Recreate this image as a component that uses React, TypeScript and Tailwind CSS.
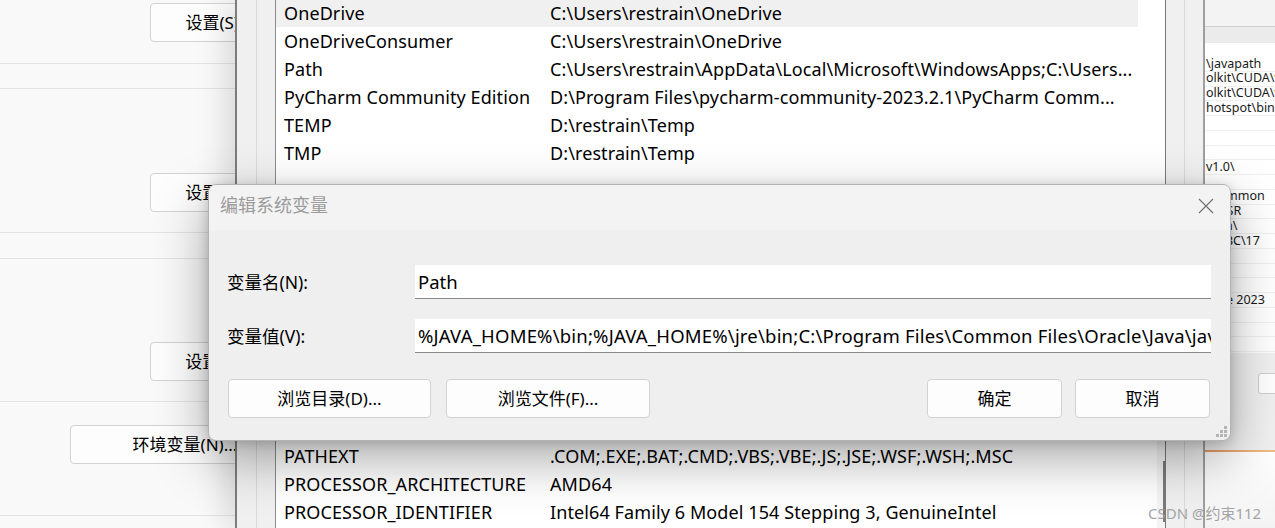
import React from "react";

const userVars = [
    ["OneDrive", "C:\\Users\\restrain\\OneDrive"],
    ["OneDriveConsumer", "C:\\Users\\restrain\\OneDrive"],
    ["Path", "C:\\Users\\restrain\\AppData\\Local\\Microsoft\\WindowsApps;C:\\Users..."],
    ["PyCharm Community Edition", "D:\\Program Files\\pycharm-community-2023.2.1\\PyCharm Comm..."],
    ["TEMP", "D:\\restrain\\Temp"],
    ["TMP", "D:\\restrain\\Temp"],
];

const sysVars = [
    ["Path", "%JAVA_HOME%\\bin;%JAVA_HOME%\\jre\\bin;C:\\Program Files\\Common..."],
    ["PATHEXT", ".COM;.EXE;.BAT;.CMD;.VBS;.VBE;.JS;.JSE;.WSF;.WSH;.MSC"],
    ["PROCESSOR_ARCHITECTURE", "AMD64"],
    ["PROCESSOR_IDENTIFIER", "Intel64 Family 6 Model 154 Stepping 3, GenuineIntel"],
];

const pathRows = [
    "\\javapath",
    "olkit\\CUDA\\v12",
    "olkit\\CUDA\\v12",
    "hotspot\\bin",
    "",
    "",
    "",
    "v1.0\\",
    "",
    "\\Common",
    "OLISR",
    "Binn\\",
    "ODBC\\17",
    "",
    "\\",
    "",
    "pute 2023",
    "",
    "",
    "",
];

const WinButton = ({ label, className }: { label: string; className: string }) => (
    <div
        className={
            "flex items-center justify-center h-[39px] shrink-0 bg-[#fdfdfd] border border-[#d2d2d2] rounded-[4px] text-[17px] text-black " +
            className
        }
    >
        {label}
    </div>
);

const VarRow = ({ name, value, active }: { name: string; value: string; active?: boolean }) => (
    <div className={"flex items-center h-[28px] pl-[8px] text-[18px] tracking-[0.1px] text-black whitespace-nowrap " + (active ? "bg-[#f0f0f0]" : "")}>
        <span className="w-[266px] shrink-0">{name}</span>
        <span>{value}</span>
    </div>
);

const App = () => {
    return (
        <div className="relative w-[1275px] h-[528px] overflow-hidden bg-[#f9f9f9] [font-family:'Noto_Sans','Noto_Sans_CJK_SC',sans-serif]">
            {/* settings window behind */}
            <div className="absolute left-0 top-0 w-[320px] h-full bg-[#f9f9f9] flex flex-col">
                <div className="h-[64px] border-b border-[#e3e3e3] pt-[3px] pl-[150px]">
                    <WinButton className="w-[138px]" label="设置(S)..." />
                </div>
                <div className="h-[25px] border-b border-[#e3e3e3]" />
                <div className="h-[144px] border-b border-[#e3e3e3] flex flex-col justify-end pb-[20px] pl-[150px]">
                    <WinButton className="w-[138px]" label="设置(T)..." />
                </div>
                <div className="h-[26px] border-b border-[#e3e3e3]" />
                <div className="h-[143px] border-b border-[#e3e3e3] flex flex-col justify-end pb-[20px] pl-[150px]">
                    <WinButton className="w-[138px]" label="设置(E)..." />
                </div>
                <div className="h-[114px] border-b border-[#e3e3e3] pt-[23px] pl-[70px]">
                    <WinButton className="w-[230px]" label="环境变量(N)..." />
                </div>
            </div>

            {/* environment variables window */}
            <div className="absolute left-[235px] top-0 w-[970px] h-full flex bg-[#f0f0f0] shadow-[-10px_0_28px_rgba(0,0,0,0.13)]">
                <div className="w-[2px] bg-[#7c7c7c]" />
                <div className="w-[20px] border-r border-[#dadada]" />
                <div className="w-[19px] border-r border-[#8c8c8c]" />
                <div className="w-[890px] border-r border-[#7a7a7a] flex flex-col">
                    <div className="h-[200px] bg-white flex overflow-hidden">
                        <div className="flex-1 -mt-[1px]">
                            {userVars.map((r, i) => (
                                <VarRow key={r[0]} name={r[0]} value={r[1]} active={i === 0} />
                            ))}
                        </div>
                        <div className="w-[27px]" />
                    </div>
                    <div className="h-[214px]" />
                    <div className="flex-1 bg-white flex overflow-hidden">
                        <div className="flex-1">
                            {sysVars.map((r) => (
                                <VarRow key={r[0]} name={r[0]} value={r[1]} />
                            ))}
                        </div>
                        <div className="w-[27px] pt-[47px] pl-[6px] bg-[#f4f4f4]">
                            <div className="w-[11px] h-[61px] bg-[#7b7b7b]" />
                        </div>
                    </div>
                </div>
                <div className="w-[19px] border-r border-[#dadada]" />
                <div className="w-[19px] border-r border-[#a0a0a0]" />
            </div>

            {/* path edit window on the right */}
            <div className="absolute left-[1204px] top-0 w-[120px] h-full flex flex-col border-l border-[#9d9d9d] bg-white">
                <div className="h-[27px] bg-[#f3f3f3] border-b border-[#cfcfcf]" />
                <div className="h-[16px] bg-[#ebebeb]" />
                <div className="h-[310px] pt-[14px] bg-white overflow-hidden">
                    {pathRows.map((t, i) => (
                        <div
                            key={i}
                            className="h-[14.75px] border-b border-[#efefef] flex items-center pl-[1px] text-[12.5px] leading-none text-[#1a1a1a] whitespace-nowrap"
                        >
                            {t}
                        </div>
                    ))}
                </div>
                <div className="h-[97px] bg-[#f0f0f0] pt-[20px] pl-[53px]">
                    <div className="w-[40px] h-[21px] bg-white border border-[#cdcdcd] rounded-[3px]" />
                </div>
                <div className="h-[2px] bg-gradient-to-r from-[#e89a62] to-[#f4d49c]" />
                <div className="flex-1 bg-gradient-to-b from-white to-[#f3f3f3]" />
            </div>

            {/* edit system variable dialog */}
            <div className="absolute left-[208px] top-[184px] w-[1023px] h-[257px] flex flex-col rounded-[8px] border border-[#b3b3b3] bg-[#efefef] overflow-hidden shadow-[0_18px_52px_rgba(0,0,0,0.34),0_2px_12px_rgba(0,0,0,0.16)]">
                <div className="h-[45px] shrink-0 flex items-center justify-between pl-[11px] pr-[16px] pb-[4px] bg-[#f3f3f3]">
                    <span className="text-[18px] text-[#9b9b9b]">编辑系统变量</span>
                    <svg width="16" height="16" viewBox="0 0 16 16" className="text-[#6e6e6e]">
                        <path d="M1 1 L15 15 M15 1 L1 15" stroke="currentColor" strokeWidth="1.1" fill="none" />
                    </svg>
                </div>
                <div className="flex-1 flex flex-col pt-[35px] pl-[18px] pr-[19px]">
                    <div className="flex items-center">
                        <span className="w-[188px] shrink-0 text-[17.5px] text-black">变量名(N):</span>
                        <div className="flex-1 h-[34px] bg-white border-b border-[#8a8a8a] flex items-center pl-[3px] text-[18.5px] text-black">
                            Path
                        </div>
                    </div>
                    <div className="flex items-center mt-[20px]">
                        <span className="w-[188px] shrink-0 text-[17.5px] text-black">变量值(V):</span>
                        <div className="flex-1 h-[34px] bg-white border-b border-[#8a8a8a] flex items-center pl-[3px] text-[18.5px] tracking-[0.2px] text-black whitespace-nowrap overflow-hidden">
                            %JAVA_HOME%\bin;%JAVA_HOME%\jre\bin;C:\Program Files\Common Files\Oracle\Java\javapath
                        </div>
                    </div>
                    <div className="flex items-center mt-[26px] pl-[1px] pr-[1px]">
                        <WinButton className="w-[203px]" label="浏览目录(D)..." />
                        <WinButton className="w-[204px] ml-[15px]" label="浏览文件(F)..." />
                        <WinButton className="w-[135px] ml-auto" label="确定" />
                        <WinButton className="w-[135px] ml-[13px]" label="取消" />
                    </div>
                </div>
                <svg width="12" height="12" viewBox="0 0 12 12" className="absolute right-[2px] bottom-[2px] text-[#b4b4b4]">
                    <rect x="8" y="0" width="3" height="3" fill="currentColor" />
                    <rect x="4" y="4" width="3" height="3" fill="currentColor" />
                    <rect x="8" y="4" width="3" height="3" fill="currentColor" />
                    <rect x="0" y="8" width="3" height="3" fill="currentColor" />
                    <rect x="4" y="8" width="3" height="3" fill="currentColor" />
                    <rect x="8" y="8" width="3" height="3" fill="currentColor" />
                </svg>
            </div>

            {/* watermark */}
            <div className="absolute left-[1148px] top-[502px] text-[15px] text-[#9c9c9c] opacity-90 whitespace-nowrap">
                CSDN @约束112
            </div>
        </div>
    );
};

export default App;
